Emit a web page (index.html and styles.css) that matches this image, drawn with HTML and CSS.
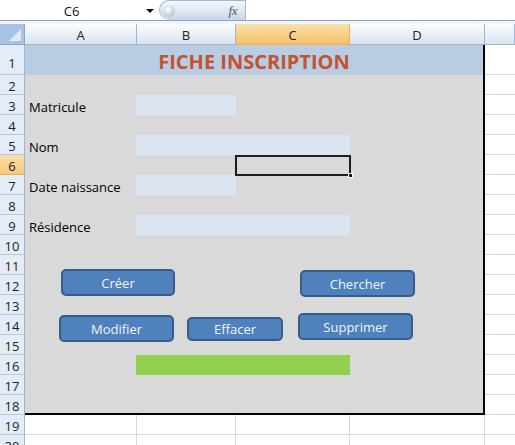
FILE: index.html
```html
<!DOCTYPE html>
<html lang="fr">
<head>
<meta charset="utf-8">
<title>Fiche inscription</title>
<link rel="stylesheet" href="styles.css">
</head>
<body>
<div class="topbar">
  <div class="namebox">C6</div>
  <div class="nb-arrow"></div>
  <div class="fbar">
    <span class="fbar-knob"></span>
    <span class="fx">fx</span>
  </div>
</div>
<div class="sep"></div>
<div class="sheet">
  <div class="corner"><span class="tri"></span></div>
  <div class="colh">A</div>
  <div class="colh">B</div>
  <div class="colh colh-sel">C</div>
  <div class="colh">D</div>
  <div class="colh"></div>

  <div class="rowh rowh-1">1</div>
  <div class="form">
    <div class="title">FICHE INSCRIPTION</div>
    <div class="label r3">Matricule</div>
    <div class="field r3 c2"></div>
    <div class="label r5">Nom</div>
    <div class="field r5 c23"></div>
    <div class="selcell r6"><span class="handle"></span></div>
    <div class="label r7">Date naissance</div>
    <div class="field r7 c2"></div>
    <div class="label r9">Résidence</div>
    <div class="field r9 c23"></div>
    <div class="green r16 c23"></div>

    <div class="btn btn-creer">Créer</div>
    <div class="btn btn-chercher">Chercher</div>
    <div class="btn btn-modifier">Modifier</div>
    <div class="btn btn-effacer">Effacer</div>
    <div class="btn btn-supprimer">Supprimer</div>
  </div>
  <div class="cell e"></div>

  <div class="rowh">2</div><div class="cell e"></div>
  <div class="rowh">3</div><div class="cell e"></div>
  <div class="rowh">4</div><div class="cell e"></div>
  <div class="rowh">5</div><div class="cell e"></div>
  <div class="rowh rowh-sel">6</div><div class="cell e"></div>
  <div class="rowh">7</div><div class="cell e"></div>
  <div class="rowh">8</div><div class="cell e"></div>
  <div class="rowh">9</div><div class="cell e"></div>
  <div class="rowh">10</div><div class="cell e"></div>
  <div class="rowh">11</div><div class="cell e"></div>
  <div class="rowh">12</div><div class="cell e"></div>
  <div class="rowh">13</div><div class="cell e"></div>
  <div class="rowh">14</div><div class="cell e"></div>
  <div class="rowh">15</div><div class="cell e"></div>
  <div class="rowh">16</div><div class="cell e"></div>
  <div class="rowh">17</div><div class="cell e"></div>
  <div class="rowh">18</div><div class="cell e"></div>

  <div class="rowh">19</div>
  <div class="cell"></div><div class="cell"></div><div class="cell"></div><div class="cell"></div><div class="cell e"></div>
  <div class="rowh">20</div>
  <div class="cell"></div><div class="cell"></div><div class="cell"></div><div class="cell"></div><div class="cell e"></div>
</div>
</body>
</html>
```

FILE: styles.css
```css
* { box-sizing: border-box; }

html, body {
  margin: 0;
  padding: 0;
  background: #ffffff;
  overflow: hidden;
}

body {
  width: 515px;
  height: 445px;
  font-family: "Open Sans", "Liberation Sans", sans-serif;
  font-size: 13px;
  color: #111;
}

/* ---------- formula bar ---------- */
.topbar {
  height: 21px;
  display: flex;
  align-items: center;
  border-bottom: 1px solid #8ea3c0;
  background: #ffffff;
}

.namebox {
  width: 143px;
  text-align: center;
  font-size: 13px;
  color: #111;
  padding-top: 1px;
}

.nb-arrow {
  width: 0;
  height: 0;
  border-left: 4px solid transparent;
  border-right: 4px solid transparent;
  border-top: 4px solid #111;
  margin-left: 3px;
  margin-top: 1px;
}

.fbar {
  margin-left: 5px;
  width: 87px;
  height: 20px;
  display: flex;
  align-items: center;
  justify-content: space-between;
  border: 1px solid #a6b8d1;
  border-bottom: none;
  border-radius: 10px 0 0 10px;
  background: linear-gradient(#f4f7fc, #dbe5f2 60%, #c8d6ea);
  padding: 0 8px 0 3px;
}

.fbar-knob {
  width: 12px;
  height: 12px;
  border-radius: 50%;
  background: radial-gradient(circle at 40% 35%, #ffffff, #c9ced6 60%, #9aa3b0);
}

.fx {
  font-family: "Liberation Serif", serif;
  font-style: italic;
  font-size: 13px;
  color: #555;
  letter-spacing: -0.5px;
}

.sep {
  height: 3px;
  background: #f1f4f9;
}

/* ---------- sheet grid ---------- */
.sheet {
  display: grid;
  grid-template-columns: 25px 112px 99px 114px 135px 30px;
  grid-template-rows: 21px 30px repeat(19, 20px);
}

.corner {
  position: relative;
  background: #a9c3e6;
  border-right: 1px solid #8ea7c8;
  border-bottom: 1px solid #8ea7c8;
}

.tri {
  position: absolute;
  right: 3px;
  bottom: 3px;
  width: 0;
  height: 0;
  border-left: 12px solid transparent;
  border-bottom: 12px solid #dfe9f7;
}

.colh {
  display: flex;
  align-items: center;
  justify-content: center;
  background: linear-gradient(#fbfcfe, #e9eef6 55%, #dae3ef);
  border-right: 1px solid #9eb6ce;
  border-bottom: 1px solid #9eb6ce;
  color: #222;
  font-size: 13px;
  padding-top: 1px;
}

.colh-sel {
  background: linear-gradient(#fae0ad, #f7cf85 55%, #f3c06a);
  border-right-color: #f2b14d;
  border-bottom-color: #f2b14d;
}

.rowh {
  display: flex;
  align-items: center;
  justify-content: center;
  background: #e4ecf7;
  border-right: 1px solid #9eb6ce;
  border-bottom: 1px solid #b7c9de;
  color: #222;
  font-size: 13px;
  padding-top: 3px;
}

.rowh-1 { padding-top: 7px; }

.rowh-sel {
  background: linear-gradient(#fae0ad, #f5c877);
  border-bottom-color: #f2b14d;
}

.cell {
  border-right: 1px solid #d0d7e5;
  border-bottom: 1px solid #d0d7e5;
  background: #ffffff;
}

.cell.e { border-right: none; }

/* ---------- form block ---------- */
.form {
  grid-column: 2 / 6;
  grid-row: 2 / 20;
  position: relative;
  display: grid;
  grid-template-columns: 112px 99px 114px 1fr;
  grid-template-rows: 30px repeat(17, 20px);
  background: #d9d9d9;
  border-right: 2px solid #000;
  border-bottom: 2px solid #000;
}

.title {
  grid-column: 1 / -1;
  grid-row: 1;
  background: #b8cce4;
  display: flex;
  align-items: center;
  justify-content: center;
  font-weight: bold;
  font-size: 20px;
  color: #c4532f;
  padding-top: 2px;
}

.label {
  grid-column: 1;
  display: flex;
  align-items: center;
  padding-left: 4px;
  padding-top: 3px;
  font-size: 13px;
  color: #000;
}

.r3 { grid-row: 3; }
.r5 { grid-row: 5; }
.r6 { grid-row: 6; }
.r7 { grid-row: 7; }
.r9 { grid-row: 9; }
.r16 { grid-row: 16; }

.c2 { grid-column: 2; }
.c23 { grid-column: 2 / 4; }

.field {
  background: #dbe5f1;
  margin-left: -1px;
}

.green {
  background: #92d050;
  margin-left: -1px;
}

.selcell {
  grid-column: 3;
  position: relative;
  border: 2px solid #1c1c1c;
  margin: 0 -1px -1px -1px;
}

.handle {
  position: absolute;
  right: -4px;
  bottom: -4px;
  width: 5px;
  height: 5px;
  background: #1c1c1c;
  border: 1px solid #ffffff;
}

/* ---------- buttons (shapes floating over the sheet) ---------- */
.btn {
  position: absolute;
  display: flex;
  align-items: center;
  justify-content: center;
  background: #4f81bd;
  border: 2.5px solid #385d8a;
  border-radius: 5px;
  color: #f2f5fa;
  font-size: 13px;
}

.btn-creer     { left: 36px;  top: 224px; width: 114px; height: 27px; }
.btn-chercher  { left: 275px; top: 225px; width: 115px; height: 27px; }
.btn-modifier  { left: 34px;  top: 270px; width: 115px; height: 27px; }
.btn-effacer   { left: 162px; top: 272px; width: 96px;  height: 24px; }
.btn-supprimer { left: 273px; top: 268px; width: 115px; height: 27px; }
```
